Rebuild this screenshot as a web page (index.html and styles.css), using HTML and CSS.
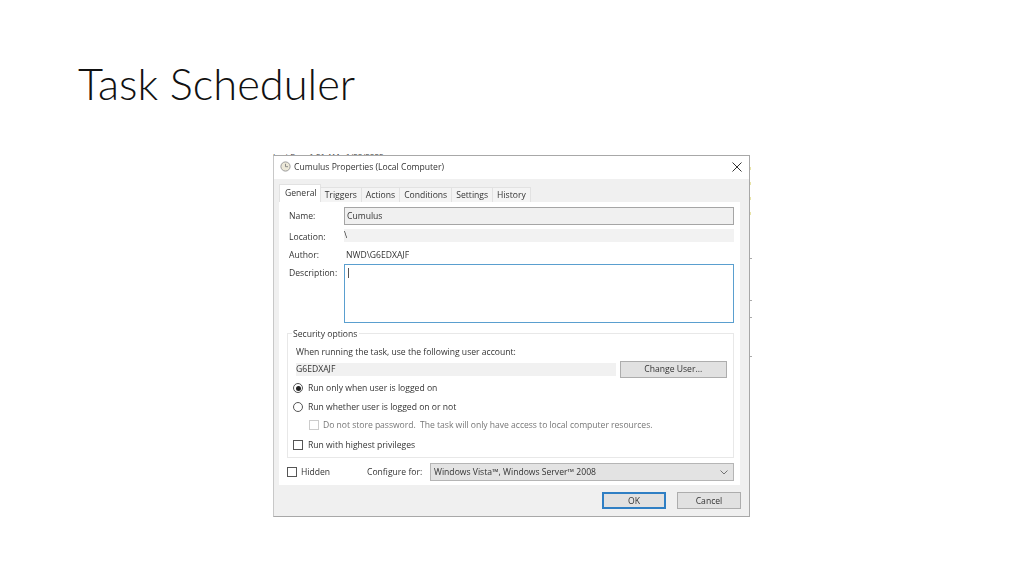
FILE: index.html
```html
<!DOCTYPE html>
<html lang="en">
<head>
    <meta charset="UTF-8">
    <title>Task Scheduler</title>
    <link rel="stylesheet" href="styles.css">
</head>
<body>

    <h1 class="title">Task Scheduler</h1>

    <div class="shot">
        <!-- window behind the dialog, only a sliver shows -->
        <div class="behind"><span>Last Run: 1:21 AM &nbsp; 1/20/2022</span></div>

        <div class="shot-row">
            <div class="dialog">
                <div class="titlebar">
                    <svg class="clock" width="11" height="11" viewBox="0 0 11 11">
                        <circle cx="5.5" cy="5.5" r="4.6" fill="#ece8d8" stroke="#9a9a9a" stroke-width="1"/>
                        <path d="M5.5 2.8V5.7H8" fill="none" stroke="#808080" stroke-width="0.9"/>
                    </svg>
                    <span class="caption">Cumulus Properties (Local Computer)</span>
                    <svg class="close" width="10" height="10" viewBox="0 0 10 10">
                        <path d="M0.5 0.5L9.5 9.5M9.5 0.5L0.5 9.5" stroke="#333" stroke-width="1" fill="none"/>
                    </svg>
                </div>

                <div class="tabs">
                    <span class="tab active">General</span>
                    <span class="tab">Triggers</span>
                    <span class="tab">Actions</span>
                    <span class="tab">Conditions</span>
                    <span class="tab">Settings</span>
                    <span class="tab">History</span>
                </div>

                <div class="panel">
                    <div class="row name-row">
                        <label>Name:</label>
                        <div class="name-input">Cumulus</div>
                    </div>
                    <div class="row location-row">
                        <label>Location:</label>
                        <div class="readonly">\</div>
                    </div>
                    <div class="row author-row">
                        <label>Author:</label>
                        <div class="plain">NWD\G6EDXAJF</div>
                    </div>
                    <div class="row desc-row">
                        <label>Description:</label>
                        <div class="desc-input"><i class="cursor"></i></div>
                    </div>

                    <div class="security">
                        <span class="legend">Security options</span>
                        <p class="hint">When running the task, use the following user account:</p>
                        <div class="account-row">
                            <div class="account">G6EDXAJF</div>
                            <div class="btn change">Change User...</div>
                        </div>
                        <div class="opt first"><i class="radio on"></i>Run only when user is logged on</div>
                        <div class="opt second"><i class="radio"></i>Run whether user is logged on or not</div>
                        <div class="opt third disabled"><i class="check"></i>Do not store password.&nbsp; The task will only have access to local computer resources.</div>
                        <div class="opt fourth"><i class="check"></i>Run with highest privileges</div>
                    </div>

                    <div class="bottom-row">
                        <div class="opt hidden-opt"><i class="check"></i>Hidden</div>
                        <label class="config-label">Configure for:</label>
                        <div class="select">
                            <span>Windows Vista™, Windows Server™ 2008</span>
                            <svg width="8" height="5" viewBox="0 0 8 5">
                                <path d="M0.5 0.5L4 4L7.5 0.5" fill="none" stroke="#666" stroke-width="0.9"/>
                            </svg>
                        </div>
                    </div>
                </div>

                <div class="actions">
                    <div class="btn ok">OK</div>
                    <div class="btn cancel">Cancel</div>
                </div>
            </div>

            <!-- bits of the window behind, along the right edge -->
            <div class="edge">
                <i class="dot"></i>
                <i class="dot"></i>
                <i class="dot"></i>
                <i class="dot"></i>
                <i class="tick tick-a"></i>
                <i class="tick tick-b"></i>
                <i class="tick tick-c"></i>
                <i class="tick tick-d"></i>
            </div>
        </div>
    </div>

</body>
</html>
```

FILE: styles.css
```css
* {
    margin: 0;
    padding: 0;
    box-sizing: border-box;
}

body {
    width: 1024px;
    height: 576px;
    overflow: hidden;
    background-color: #fff;
    font-family: "Open Sans", sans-serif;
    font-size: 8.6px;
    color: #333;
}

.title {
    font-family: Lato, sans-serif;
    font-weight: 300;
    font-size: 43.4px;
    line-height: 52px;
    color: #111;
    margin: 57px 0 0 78px;
}

.shot {
    margin: 43px 0 0 273px;
    width: 480px;
}

.shot-row {
    display: flex;
}

.behind {
    height: 3px;
    overflow: hidden;
    font-size: 8px;
    line-height: 8px;
    color: #444;
}

.dialog {
    width: 477px;
    height: 362px;
    background-color: #f0f0f0;
    border: 1px solid #a8a8a8;
    border-left-color: #c8c8c8;
    filter: blur(0.3px);
}

.edge {
    width: 2px;
    display: flex;
    flex-direction: column;
    align-items: flex-start;
}

.dot {
    display: block;
    width: 1px;
    height: 3px;
    margin-top: 12px;
    background-color: #e8e4a8;
}

.tick {
    display: block;
    width: 2px;
    height: 1px;
    background-color: #aaa;
}

.tick-a {
    margin-top: 43px;
}

.tick-b {
    margin-top: 41px;
}

.tick-c {
    margin-top: 16px;
}

.tick-d {
    margin-top: 38px;
}

.titlebar {
    height: 23px;
    background-color: #fff;
    display: flex;
    align-items: center;
    padding: 0 7px 2px 6px;
}

.caption {
    margin-left: 3px;
    flex: 1;
}

.tabs {
    display: flex;
    height: 23px;
    padding: 5px 0 0 5px;
    align-items: flex-end;
}

.tab {
    height: 15px;
    line-height: 15px;
    padding: 0 4px;
    background-color: #f4f4f4;
    border: 1px solid #e2e2e2;
    border-bottom: none;
    margin-left: -1px;
}

.tab.active {
    height: 18px;
    line-height: 17px;
    background-color: #fff;
    padding: 0 3px 0 5px;
    margin-left: 0;
}

.panel {
    width: 461px;
    height: 283px;
    margin-left: 5px;
    background-color: #fff;
    padding: 5px 6px 0 10px;
}

.row {
    display: flex;
}

.row label {
    width: 55px;
    flex: none;
}

.name-row {
    align-items: center;
}

.name-input {
    flex: 1;
    height: 18px;
    line-height: 16px;
    padding-left: 2px;
    background-color: #f0f0f0;
    border: 1px solid #a5a5a5;
}

.location-row {
    margin-top: 4px;
    line-height: 13px;
}

.row.location-row label {
    margin-top: 2px;
}

.readonly {
    flex: 1;
    height: 13px;
    line-height: 13px;
    background-color: #f2f2f2;
}

.author-row {
    margin-top: 4px;
    height: 15px;
    line-height: 15px;
}

.plain {
    padding-left: 2px;
}

.desc-row {
    margin-top: 1px;
}

.row.desc-row label {
    margin-top: 3px;
}

.desc-input {
    flex: 1;
    height: 59px;
    border: 1px solid #5a9fcf;
    padding: 3px 3px;
}

.cursor {
    display: block;
    width: 1px;
    height: 10px;
    background-color: #555;
}

.security {
    position: relative;
    margin: 10px 0 0 -2px;
    height: 125px;
    border: 1px solid #e8e8e8;
    padding: 12px 6px 0 8px;
}

.legend {
    position: absolute;
    left: 4px;
    top: -6px;
    background-color: #fff;
    padding: 0 2px 0 1px;
    line-height: 12px;
}

.hint {
    line-height: 12px;
}

.account-row {
    display: flex;
    align-items: center;
    gap: 4px;
    margin-top: 3px;
}

.account {
    width: 321px;
    height: 13px;
    line-height: 12px;
    background-color: #f1f1f1;
}

.btn {
    background-color: #e1e1e1;
    border: 1px solid #adadad;
    text-align: center;
}

.change {
    width: 108px;
    height: 17px;
    line-height: 15px;
}

.opt {
    display: flex;
    align-items: center;
    height: 12px;
    line-height: 12px;
}

.opt.first {
    margin: 4px 0 0 -3px;
}

.opt.second {
    margin: 7px 0 0 -3px;
}

.opt.third {
    margin: 6px 0 0 13px;
    letter-spacing: -0.03px;
}

.opt.fourth {
    margin: 8px 0 0 -3px;
}

.disabled {
    color: #777;
}

.disabled .check {
    border-color: #ccc;
    margin-right: 4px;
}

.radio,
.check {
    display: block;
    flex: none;
    width: 10px;
    height: 10px;
    margin-right: 5px;
    border: 1px solid #555;
}

.radio {
    border-radius: 50%;
    position: relative;
}

.radio.on::after {
    content: "";
    position: absolute;
    left: 1.5px;
    top: 1.5px;
    width: 5px;
    height: 5px;
    border-radius: 50%;
    background-color: #222;
}

.bottom-row {
    display: flex;
    align-items: center;
    margin: 5px 0 0 -2px;
    height: 18px;
}

.hidden-opt {
    width: 80px;
}

.hidden-opt .check {
    margin-right: 4px;
}

.config-label {
    width: 63px;
}

.select {
    flex: 1;
    height: 18px;
    padding: 0 5px 0 3px;
    display: flex;
    align-items: center;
    justify-content: space-between;
    background-color: #e3e3e3;
    border: 1px solid #b5b5b5;
}

.actions {
    display: flex;
    justify-content: flex-end;
    gap: 11px;
    padding: 7px 8px 0 0;
}

.actions .btn {
    width: 64px;
    height: 17px;
    line-height: 16px;
}

.actions .btn.ok {
    border: 2px solid #2f7fc4;
    line-height: 14px;
}
```
